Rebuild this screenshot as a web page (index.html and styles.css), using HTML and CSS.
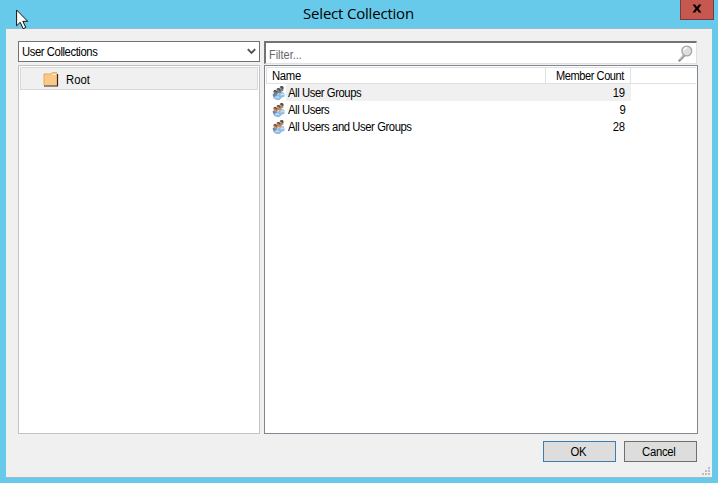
FILE: index.html
```
<!DOCTYPE html>
<html lang="en">
<head>
<meta charset="utf-8">
<title>Select Collection</title>
<link rel="stylesheet" href="styles.css">
</head>
<body>
<svg class="defs" width="0" height="0">
  <symbol id="people" viewBox="0 0 13 16">
    <path d="M.5 9.5L3 8l3 3-1 3-3-.5z" fill="#6288b0"/>
    <path d="M2 13Q2 10.7 4.5 10.6L7.5 8.5 11 6.7l1.5 2.5v2.5L10 12.5 7.5 15H4z" fill="#8fbce6"/>
    <path d="M3.5 13l2-1.2 1.7 1M8.7 10.5l1.5-1.7L12 10" fill="none" stroke="#c3e0f8" stroke-width="1.3"/>
    <path d="M1.5 6L3.5 5l2.5 2.5L5.7 9.5l-2 .8-2-1.6zM4.5 4L7 3l3 2.5L9.5 7.5 7 8.7 5 7z" fill="var(--skin)"/>
    <path d="M8 2.5L10 1l1.5 1.5-.3 3.5L9 6z" fill="var(--skin)"/>
    <path d="M1.2 6.5Q2 4.5 3.7 4.9L5.3 6.6 4.7 7.7 3.2 6.6zM4.5 4.1Q5.5 2.4 7.3 3.2L8.8 4.8 8 6 6.7 4.8zM7.5 2.3Q8.8.3 11 1.3L11.6 3 10.9 4.3 9.3 2.9z" fill="#53504b"/>
  </symbol>
</svg>
<div class="window">
  <header class="titlebar">
    <h1>Select Collection</h1>
    <button class="close" aria-label="Close"><svg width="10" height="9" viewBox="0 0 10 9"><path d="M.5.5h2.7L5 2.9 6.8.5h2.7L6.5 4.4l3 4.1H6.8L5 5.9 3.2 8.5H.5l3-4.1z"/></svg></button>
  </header>
  <main class="client">
    <div class="panes">
      <section class="left">
        <div class="combo"><span class="label">User Collections</span><svg width="9" height="7" viewBox="0 0 9 7"><path d="M.8 1.2l3.7 3.7 3.7-3.7" fill="none" stroke="#505050" stroke-width="1.9"/></svg></div>
        <div class="tree">
          <div class="node">
            <svg width="16" height="15" viewBox="0 0 16 15"><path d="M1 2h7l1-1h5v12.5H1z" fill="#fbc987"/><path d="M1 13V2h7l1-1.3h5" fill="none" stroke="#e8aa55"/><path d="M9 2.5h4" stroke="#fff2b8"/><path d="M14.5 2v12H1" fill="none" stroke="#352719" stroke-width="1.2"/></svg>
            <span class="label">Root</span>
          </div>
        </div>
      </section>
      <section class="right">
        <div class="filter"><span class="label">Filter...</span><svg width="15" height="17" viewBox="0 0 15 17"><path d="M1.5 15.5l4.8-5.2" stroke="#929292" stroke-width="2.5" stroke-linecap="round"/><path d="M1.7 14.8l4-4.3" stroke="#d0d0d0"/><circle cx="8.8" cy="6" r="4.9" fill="#dedede" stroke="#a5a5a5" stroke-width="1.3"/><path d="M5.8 5.5Q6.2 3 9 2.8" fill="none" stroke="#fff" stroke-width="1.4"/></svg></div>
        <div class="list">
          <div class="row head"><div class="name"><span class="label">Name</span></div><div class="count"><span class="label">Member Count</span></div></div>
          <div class="row selected"><svg class="icon group"><use href="#people"/></svg><div class="name"><span class="label">All User Groups</span></div><div class="count"><span class="label">19</span></div></div>
          <div class="row"><svg class="icon"><use href="#people"/></svg><div class="name"><span class="label">All Users</span></div><div class="count"><span class="label">9</span></div></div>
          <div class="row"><svg class="icon"><use href="#people"/></svg><div class="name"><span class="label">All Users and User Groups</span></div><div class="count"><span class="label">28</span></div></div>
        </div>
      </section>
    </div>
    <footer><button class="ok"><span class="label">OK</span></button><button class="cancel"><span class="label">Cancel</span></button></footer>
    <svg class="grip" width="9" height="9" viewBox="0 0 9 9"><path d="M6 0h2v2H6zM3 3h2v2H3zM6 3h2v2H6zM0 6h2v2H0zM3 6h2v2H3zM6 6h2v2H6z" fill="#bcbcbc"/></svg>
  </main>
  <svg class="cursor" width="13" height="21" viewBox="0 0 13 21"><path d="M.6 1v15.8l3.6-3.5 3 6.4 2.6-1.2-3-6.2h4.9z" fill="#fff" stroke="#111"/></svg>
</div>
</body>
</html>
```
FILE: styles.css
```
* { box-sizing: border-box; }
body { margin: 0; overflow: hidden; font: 12px/16px "Liberation Sans", Arial, sans-serif; letter-spacing: -0.45px; color: #000; }
svg { display: block; flex: none; }
.defs { position: absolute; }
.label { display: inline-block; line-height: inherit; transform: scaleX(.94); transform-origin: left center; }
.window { position: relative; width: 718px; height: 483px; padding: 0 6px 5px; background: #68caea; display: flex; flex-direction: column; }
.titlebar { height: 28px; flex: none; display: flex; justify-content: center; position: relative; }
h1 { margin: 0; padding-right: 1px; font: 15px/27px "Open Sans", "Noto Sans", sans-serif; letter-spacing: -0.2px; }
.close { position: absolute; top: 0; right: -2px; width: 34px; height: 20px; padding: 0 0 2px; display: flex; align-items: center; justify-content: center; background: #c75850; border: 1px solid #743c42; border-top: 0; }
.client { position: relative; flex: 1; background: #f0f0f0; border-top: 1px solid #94bdce; border-bottom: 1px solid #9cbcc8; padding: 12px 14px 0 12px; }
.panes { display: flex; gap: 4px; height: 393px; }
.left { width: 242px; display: flex; flex-direction: column; gap: 3px; }
.combo { height: 21px; border: 1px solid #727272; background: #fff; display: flex; align-items: center; justify-content: space-between; padding: 1px 3px; }
.tree { flex: 1; border: 1px solid #c3c3c3; background: #fff; padding: 1px; }
.node { height: 23px; border: 1px solid #d9d9d9; background: #f0f0f0; display: flex; align-items: center; gap: 7px; padding: 2px 0 0 22px; letter-spacing: 0; }
.right { width: 434px; display: flex; flex-direction: column; gap: 1px; }
.filter { height: 23px; width: 433px; border: 1px solid #e1e1e1; border-top: 2px solid #747474; border-left: 2px solid #747474; background: #fff; display: flex; justify-content: space-between; align-items: center; padding: 2px 3px 0; color: #666; letter-spacing: 0; }
.filter .label { padding-top: 2px; transform: scaleX(.91); }
.filter svg { margin-top: -1px; }
.list { flex: 1; border: 1px solid #7f8790; background: #fff; padding: 1px; }
.row { height: 17px; width: 365px; display: flex; align-items: center; padding-left: 6px; }
.row .name { flex: 1; height: 17px; line-height: 18px; padding-left: 2px; margin-left: 1px; }
.row .count { width: 84px; height: 17px; line-height: 18px; padding-right: 6px; text-align: right; letter-spacing: -0.3px; }
.count .label { transform-origin: right center; }
.selected .name, .selected .count { background: #f0f0f0; }
.head { width: auto; border: 1px solid #e0e0e0; border-width: 1px 0 1px 1px; padding-left: 3px; }
.head .name { flex: none; width: 275px; height: 15px; line-height: 17px; padding-left: 1px; border-right: 1px solid #e0e0e0; letter-spacing: -0.3px; }
.head .count { width: 85px; height: 15px; line-height: 17px; border-right: 1px solid #e0e0e0; letter-spacing: -0.45px; }
.head .count .label { transform: scaleX(.92); }
.icon { width: 13px; height: 16px; --skin: #c58b5f; }
.group { --skin: #75828c; }
footer { display: flex; justify-content: flex-end; gap: 8px; padding: 7px 1px 0 0; }
footer button { width: 73px; height: 21px; padding: 0 3px 0 0; font: inherit; letter-spacing: -0.3px; border: 1px solid #707070; background: #ddd; color: #000; }
footer .label { transform-origin: center; }
footer .ok { border-color: #3e7dac; }
.grip { position: absolute; right: 1px; bottom: 1px; }
.cursor { position: absolute; left: 16px; top: 9px; }
```
